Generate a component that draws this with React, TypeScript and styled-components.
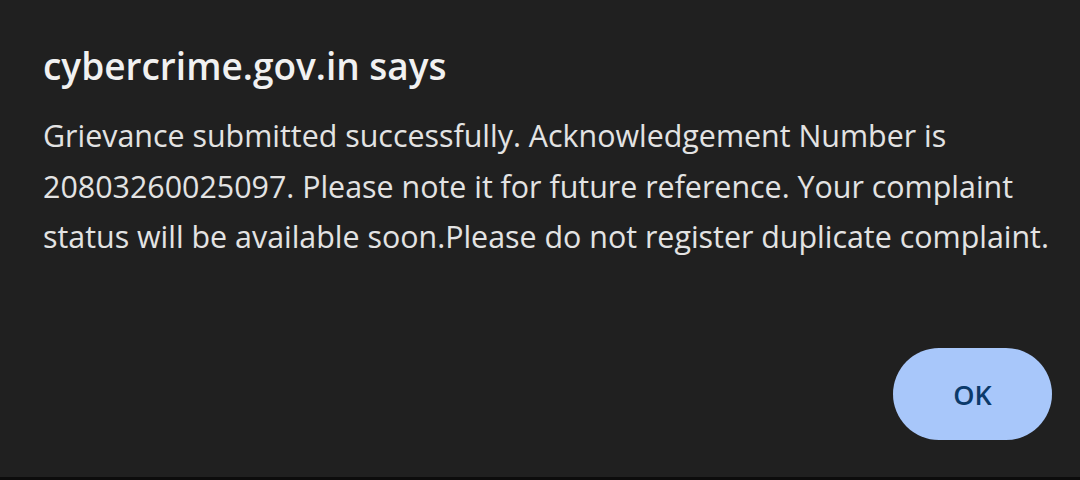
import React from "react";
import styled, { createGlobalStyle } from "styled-components";

const Global = createGlobalStyle`
  html, body { margin: 0; padding: 0; background: #202020; }
  * { box-sizing: border-box; }
`;

const Dialog = styled.div`
  width: 1080px;
  height: 480px;
  background: #202020;
  border-bottom: 3px solid #0c0c0c;
  padding: 41px 20px 0 43px;
  display: flex;
  flex-direction: column;
  font-family: "Open Sans", "Noto Sans", sans-serif;
  color: #e3e3e3;
`;

const Title = styled.h1`
  margin: 0;
  font-size: 37px;
  font-weight: 600;
  line-height: 50px;
  color: #f1f1f1;
  letter-spacing: 0;
`;

const Message = styled.p`
  margin: 20px 0 0;
  font-size: 30.4px;
  line-height: 50.5px;
  font-weight: 400;
  color: #e3e3e3;
  letter-spacing: 0;
  white-space: nowrap;
`;

const Actions = styled.div`
  display: flex;
  justify-content: flex-end;
  margin-top: auto;
  margin-bottom: 37px;
  padding-right: 8px;
`;

const OkButton = styled.button`
  width: 159px;
  height: 92px;
  border: none;
  border-radius: 46px;
  background: #a8c7fa;
  color: #0b3a6a;
  font-family: "Open Sans", "Noto Sans", sans-serif;
  font-size: 27px;
  font-weight: 600;
  cursor: pointer;
`;

export default function App() {
  return (
    <>
      <Global />
      <Dialog>
        <Title>cybercrime.gov.in says</Title>
        <Message>
          Grievance submitted successfully. Acknowledgement Number is
          <br />
          20803260025097. Please note it for future reference. Your complaint
          <br />
          status will be available soon.Please do not register duplicate complaint.
        </Message>
        <Actions>
          <OkButton>OK</OkButton>
        </Actions>
      </Dialog>
    </>
  );
}
